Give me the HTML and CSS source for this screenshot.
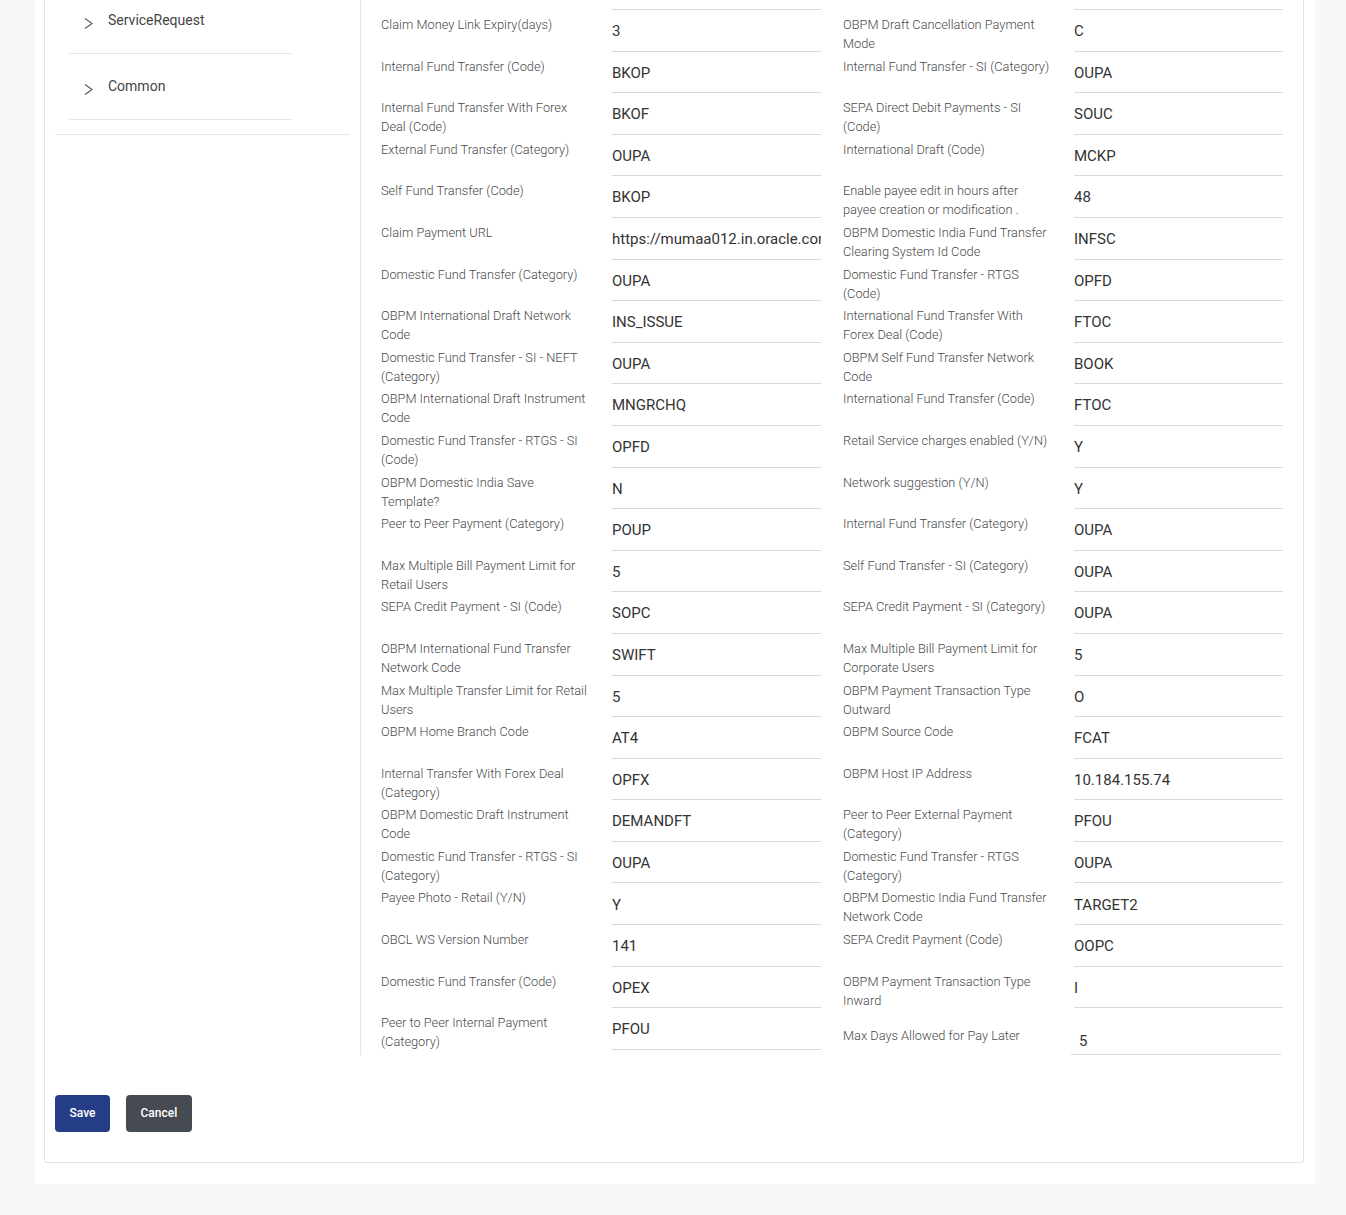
FILE: index.html
```html
<!DOCTYPE html>
<html lang="en">
<head>
<meta charset="utf-8">
<title>Payment Configuration</title>
<link rel="stylesheet" href="styles.css">
</head>
<body>
<div class="page">
  <div class="card">
    <div class="layout">
      <aside class="sidebar">
        <ul class="menu">
          <li class="menu-item">
            <svg class="chev" width="9" height="12" viewBox="0 0 9 12"><path d="M1 1.5L8 6.5L1 11.5" fill="none" stroke="#5a5a5a" stroke-width="1.2"/></svg>
            <span>ServiceRequest</span>
          </li>
          <li class="menu-item">
            <svg class="chev" width="9" height="12" viewBox="0 0 9 12"><path d="M1 1.5L8 6.5L1 11.5" fill="none" stroke="#5a5a5a" stroke-width="1.2"/></svg>
            <span>Common</span>
          </li>
        </ul>
      </aside>
      <main class="main">
        <div class="row stub"><div class="field"><div></div><div class="value"></div></div><div class="field"><div></div><div class="value"></div></div></div>

        <div class="row">
          <div class="field"><div class="label">Claim Money Link Expiry(days)</div><div class="value">3</div></div>
          <div class="field"><div class="label">OBPM Draft Cancellation Payment Mode</div><div class="value">C</div></div>
        </div>
        <div class="row">
          <div class="field"><div class="label">Internal Fund Transfer (Code)</div><div class="value">BKOP</div></div>
          <div class="field"><div class="label">Internal Fund Transfer - SI (Category)</div><div class="value">OUPA</div></div>
        </div>
        <div class="row">
          <div class="field"><div class="label">Internal Fund Transfer With Forex Deal (Code)</div><div class="value">BKOF</div></div>
          <div class="field"><div class="label">SEPA Direct Debit Payments - SI (Code)</div><div class="value">SOUC</div></div>
        </div>
        <div class="row">
          <div class="field"><div class="label">External Fund Transfer (Category)</div><div class="value">OUPA</div></div>
          <div class="field"><div class="label">International Draft (Code)</div><div class="value">MCKP</div></div>
        </div>
        <div class="row">
          <div class="field"><div class="label">Self Fund Transfer (Code)</div><div class="value">BKOP</div></div>
          <div class="field"><div class="label">Enable payee edit in hours after payee creation or modification .</div><div class="value">48</div></div>
        </div>
        <div class="row">
          <div class="field"><div class="label">Claim Payment URL</div><div class="value">https://mumaa012.in.oracle.com:18443/claimpayment</div></div>
          <div class="field"><div class="label">OBPM Domestic India Fund Transfer Clearing System Id Code</div><div class="value">INFSC</div></div>
        </div>
        <div class="row">
          <div class="field"><div class="label">Domestic Fund Transfer (Category)</div><div class="value">OUPA</div></div>
          <div class="field"><div class="label">Domestic Fund Transfer - RTGS (Code)</div><div class="value">OPFD</div></div>
        </div>
        <div class="row">
          <div class="field"><div class="label">OBPM International Draft Network Code</div><div class="value">INS_ISSUE</div></div>
          <div class="field"><div class="label">International Fund Transfer With Forex Deal (Code)</div><div class="value">FTOC</div></div>
        </div>
        <div class="row">
          <div class="field"><div class="label">Domestic Fund Transfer - SI - NEFT (Category)</div><div class="value">OUPA</div></div>
          <div class="field"><div class="label">OBPM Self Fund Transfer Network Code</div><div class="value">BOOK</div></div>
        </div>
        <div class="row">
          <div class="field"><div class="label">OBPM International Draft Instrument Code</div><div class="value">MNGRCHQ</div></div>
          <div class="field"><div class="label">International Fund Transfer (Code)</div><div class="value">FTOC</div></div>
        </div>
        <div class="row">
          <div class="field"><div class="label">Domestic Fund Transfer - RTGS - SI (Code)</div><div class="value">OPFD</div></div>
          <div class="field"><div class="label">Retail Service charges enabled (Y/N)</div><div class="value">Y</div></div>
        </div>
        <div class="row">
          <div class="field"><div class="label">OBPM Domestic India Save Template?</div><div class="value">N</div></div>
          <div class="field"><div class="label">Network suggestion (Y/N)</div><div class="value">Y</div></div>
        </div>
        <div class="row">
          <div class="field"><div class="label">Peer to Peer Payment (Category)</div><div class="value">POUP</div></div>
          <div class="field"><div class="label">Internal Fund Transfer (Category)</div><div class="value">OUPA</div></div>
        </div>
        <div class="row">
          <div class="field"><div class="label">Max Multiple Bill Payment Limit for Retail Users</div><div class="value">5</div></div>
          <div class="field"><div class="label">Self Fund Transfer - SI (Category)</div><div class="value">OUPA</div></div>
        </div>
        <div class="row">
          <div class="field"><div class="label">SEPA Credit Payment - SI (Code)</div><div class="value">SOPC</div></div>
          <div class="field"><div class="label">SEPA Credit Payment - SI (Category)</div><div class="value">OUPA</div></div>
        </div>
        <div class="row">
          <div class="field"><div class="label">OBPM International Fund Transfer Network Code</div><div class="value">SWIFT</div></div>
          <div class="field"><div class="label">Max Multiple Bill Payment Limit for Corporate Users</div><div class="value">5</div></div>
        </div>
        <div class="row">
          <div class="field"><div class="label">Max Multiple Transfer Limit for Retail Users</div><div class="value">5</div></div>
          <div class="field"><div class="label">OBPM Payment Transaction Type Outward</div><div class="value">O</div></div>
        </div>
        <div class="row">
          <div class="field"><div class="label">OBPM Home Branch Code</div><div class="value">AT4</div></div>
          <div class="field"><div class="label">OBPM Source Code</div><div class="value">FCAT</div></div>
        </div>
        <div class="row">
          <div class="field"><div class="label">Internal Transfer With Forex Deal (Category)</div><div class="value">OPFX</div></div>
          <div class="field"><div class="label">OBPM Host IP Address</div><div class="value">10.184.155.74</div></div>
        </div>
        <div class="row">
          <div class="field"><div class="label">OBPM Domestic Draft Instrument Code</div><div class="value">DEMANDFT</div></div>
          <div class="field"><div class="label">Peer to Peer External Payment (Category)</div><div class="value">PFOU</div></div>
        </div>
        <div class="row">
          <div class="field"><div class="label">Domestic Fund Transfer - RTGS - SI (Category)</div><div class="value">OUPA</div></div>
          <div class="field"><div class="label">Domestic Fund Transfer - RTGS (Category)</div><div class="value">OUPA</div></div>
        </div>
        <div class="row">
          <div class="field"><div class="label">Payee Photo - Retail (Y/N)</div><div class="value">Y</div></div>
          <div class="field"><div class="label">OBPM Domestic India Fund Transfer Network Code</div><div class="value">TARGET2</div></div>
        </div>
        <div class="row">
          <div class="field"><div class="label">OBCL WS Version Number</div><div class="value">141</div></div>
          <div class="field"><div class="label">SEPA Credit Payment (Code)</div><div class="value">OOPC</div></div>
        </div>
        <div class="row">
          <div class="field"><div class="label">Domestic Fund Transfer (Code)</div><div class="value">OPEX</div></div>
          <div class="field"><div class="label">OBPM Payment Transaction Type Inward</div><div class="value">I</div></div>
        </div>
        <div class="row">
          <div class="field"><div class="label">Peer to Peer Internal Payment (Category)</div><div class="value">PFOU</div></div>
          <div class="field field-alt"><div class="label">Max Days Allowed for Pay Later</div><div class="value">5</div></div>
        </div>
      </main>
    </div>
    <div class="actions">
      <button class="btn btn-primary" type="button">Save</button>
      <button class="btn btn-secondary" type="button">Cancel</button>
    </div>
  </div>
</div>
</body>
</html>
```
FILE: styles.css
```css
html, body {
  margin: 0;
  padding: 0;
}
body {
  background: #f8f8f8;
  font-family: Roboto, "Liberation Sans", Arial, sans-serif;
  color: #333;
}
.page {
  width: 1280px;
  margin-left: 35px;
  background: #ffffff;
  padding: 0 11px 21px 9px;
  box-sizing: border-box;
}
.card {
  border: 1px solid #e2e2e2;
  border-top: 0;
  border-radius: 0 0 3px 3px;
  padding-bottom: 30px;
}
.layout {
  display: flex;
  align-items: flex-start;
}
.sidebar {
  width: 315px;
  flex: none;
  padding: 0 10px;
  box-sizing: border-box;
}
.menu {
  list-style: none;
  margin: -12px 0 0 0;
  padding: 0 58px 14px 14px;
  border-bottom: 1px solid #e6e6e6;
}
.menu-item {
  height: 66px;
  box-sizing: border-box;
  display: flex;
  align-items: center;
  border-bottom: 1px solid #e6e6e6;
  font-size: 14px;
  color: #444;
}
.menu-item .chev {
  margin: 5px 0 0 15px;
  flex: none;
}
.menu-item span {
  margin-left: 15px;
  margin-top: -1px;
}
.main {
  flex: 1;
  border-left: 1px solid #e6e6e6;
  padding: 0 20px 5px 20px;
}
.row {
  display: grid;
  grid-template-columns: 440px 440px;
  grid-template-rows: 41.6px;
  column-gap: 22px;
  height: 41.6px;
}
.field {
  display: grid;
  grid-template-columns: 231px 1fr;
  grid-template-rows: minmax(0, 1fr);
  height: 100%;
  min-height: 0;
}
.label {
  min-height: 0;
  font-size: 12.8px;
  font-weight: 300;
  line-height: 19px;
  padding: 5px 23px 0 0;
  color: #4a4a4a;
}
.value {
  display: flex;
  align-items: flex-end;
  box-sizing: border-box;
  min-height: 0;
  padding-bottom: 9.5px;
  font-size: 15px;
  line-height: 20px;
  color: #333;
  border-bottom: 1px solid #d9d9d9;
  white-space: nowrap;
  overflow: hidden;
}
.row.stub {
  height: 10px;
  grid-template-rows: 10px;
}
.row.stub .value {
  padding: 0;
}
.field-alt .label {
  padding-top: 17.5px;
}
.field-alt .value {
  align-self: start;
  height: 47px;
  padding: 0 0 3.5px 8px;
  margin: 0 2px 0 -3px;
}
.actions {
  display: flex;
  gap: 16px;
  padding: 40px 0 0 10px;
}
.btn {
  font-family: Roboto, "Liberation Sans", Arial, sans-serif;
  font-size: 12px;
  font-weight: 500;
  color: #ffffff;
  border: 0;
  border-radius: 4px;
  height: 37px;
  padding: 0 14.5px;
}
.btn-primary {
  background: #253d87;
}
.btn-secondary {
  background: #464a52;
}
```
